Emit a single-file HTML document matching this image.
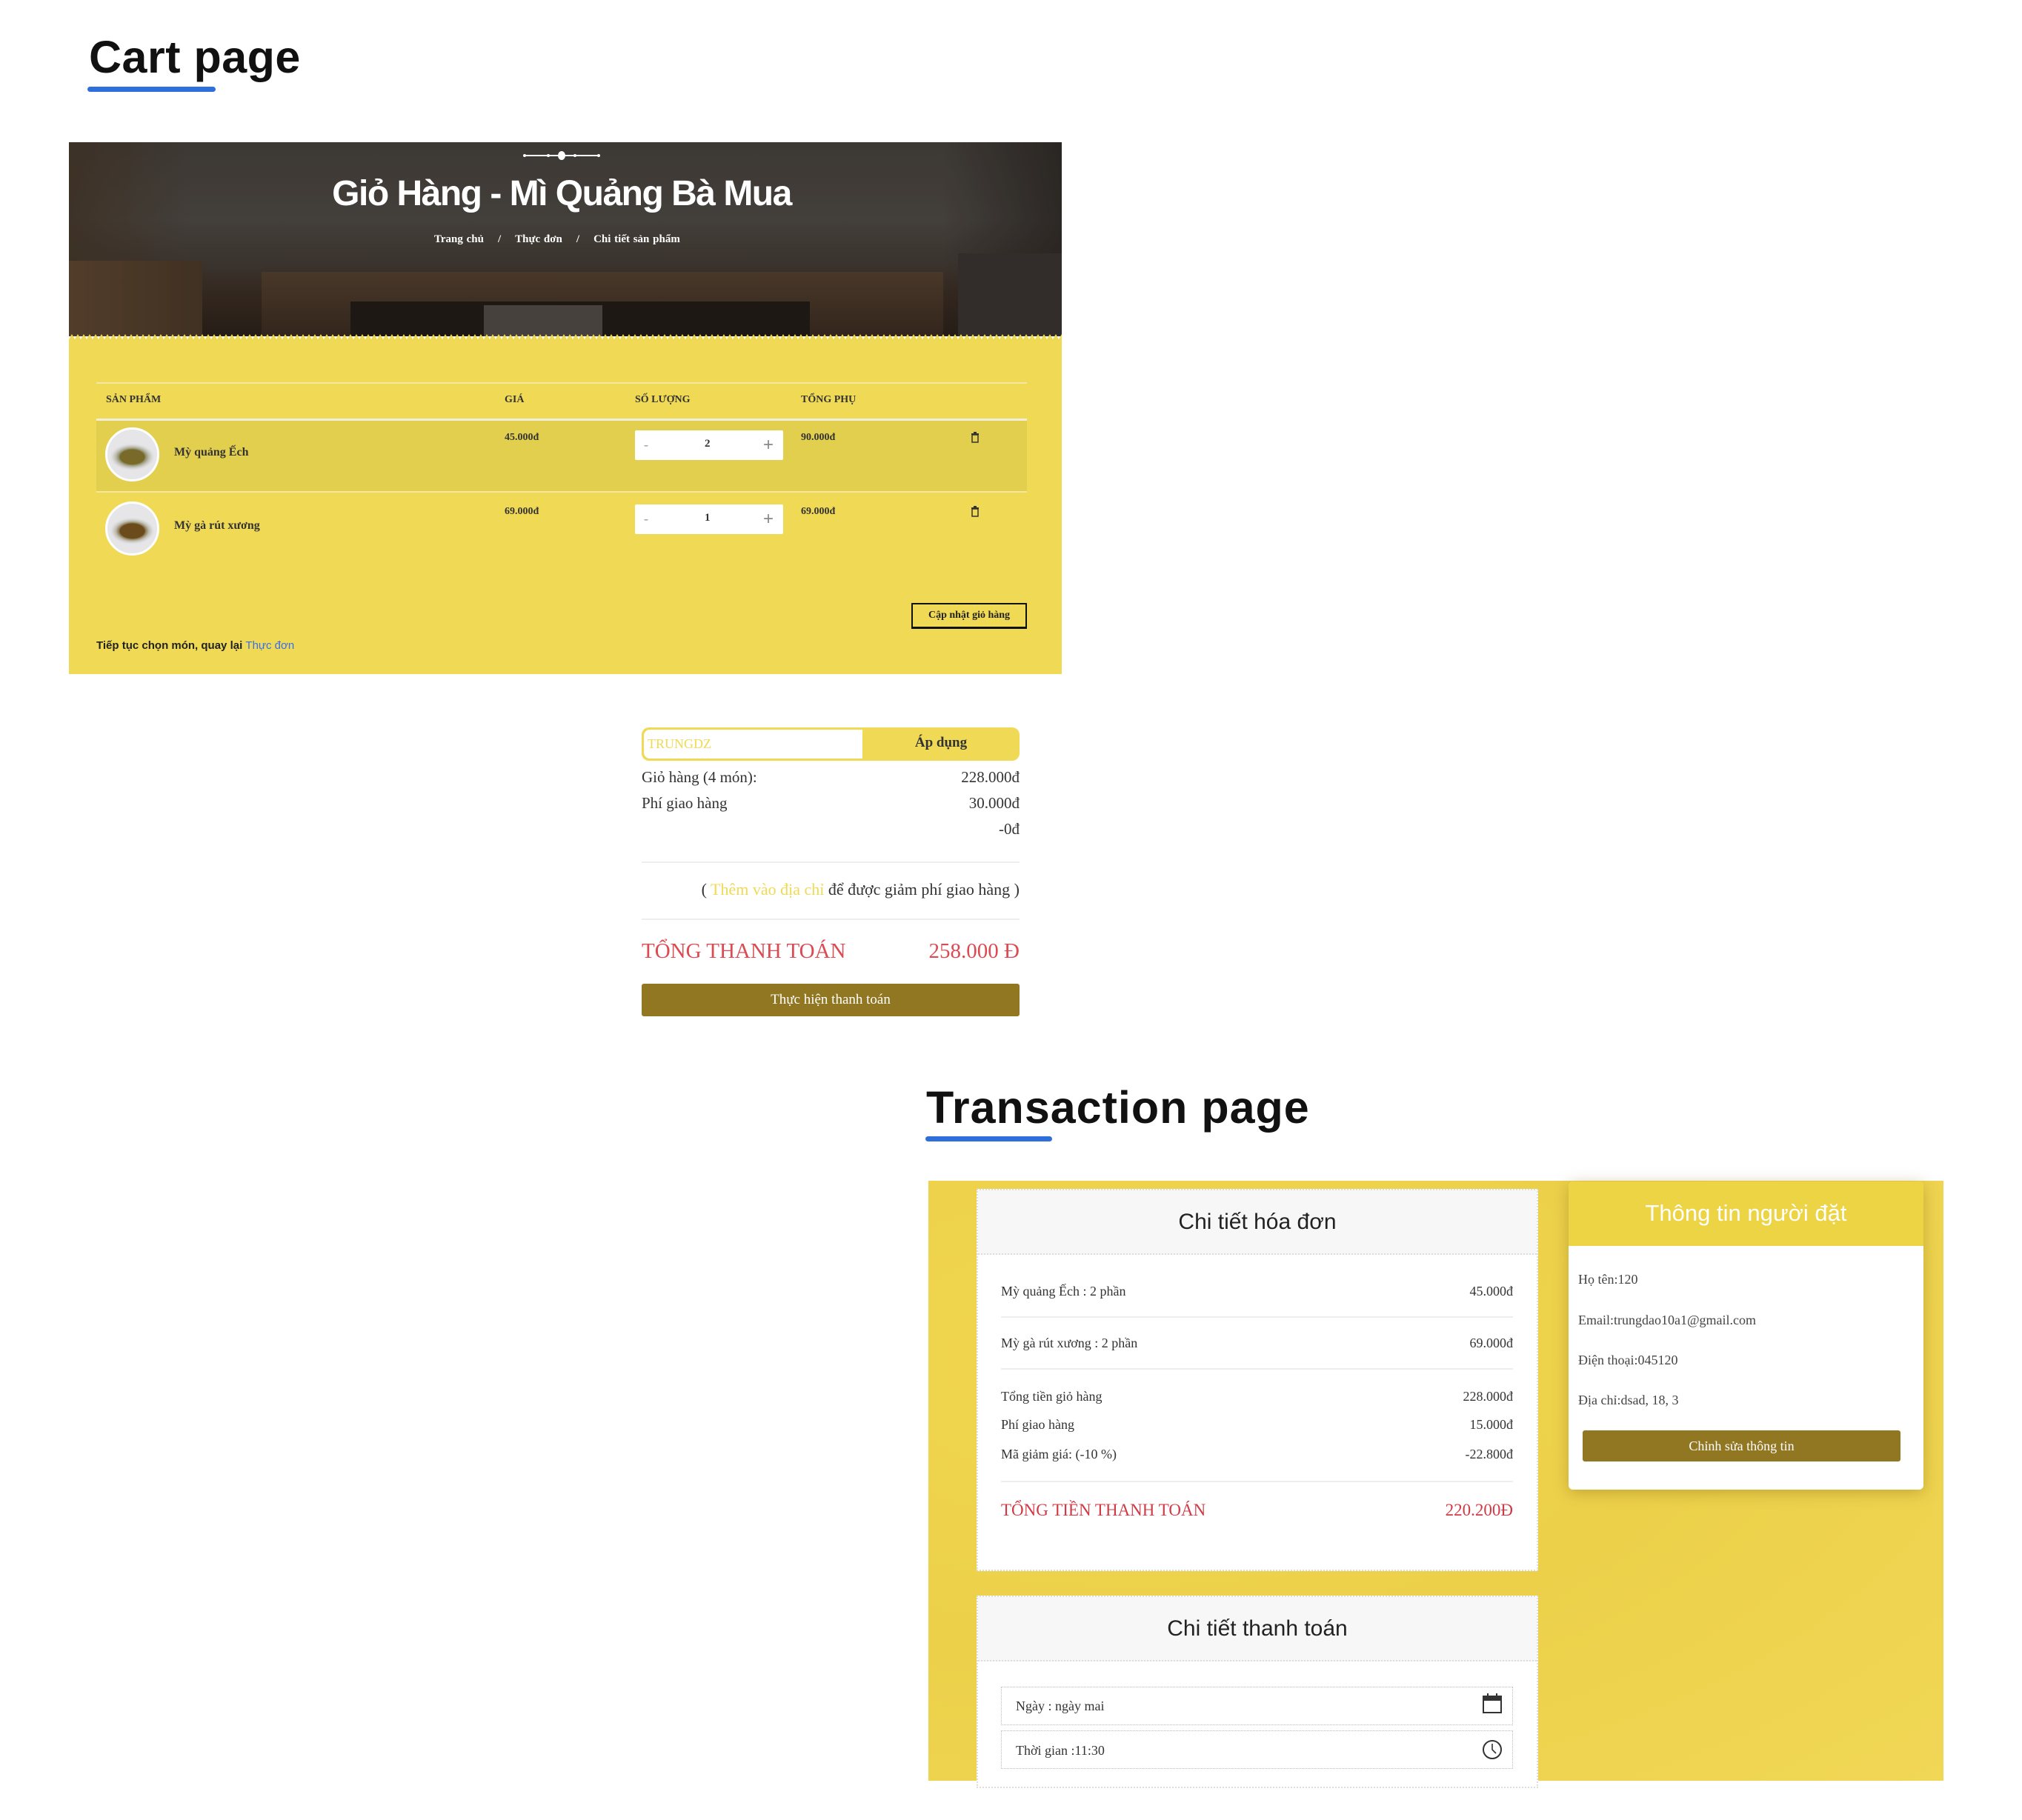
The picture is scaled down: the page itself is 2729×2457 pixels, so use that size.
<!DOCTYPE html>
<html><head><meta charset="utf-8">
<style>
*{margin:0;padding:0;box-sizing:border-box}
body{width:2729px;height:2457px;background:#fff;position:relative;overflow:hidden;font-family:"Liberation Serif",serif;color:#333}
.abs{position:absolute}
.h1{font-family:"Liberation Sans",sans-serif;font-weight:bold;font-size:61px;color:#111;white-space:nowrap}
.ul{background:#2f6fdc;height:7px;border-radius:4px}
.serif{font-family:"Liberation Serif",serif}
.sans{font-family:"Liberation Sans",sans-serif}
.t{position:absolute;white-space:nowrap}
</style></head><body>

<div class="abs h1" style="left:120px;top:42px;letter-spacing:0.5px">Cart page</div>
<div class="abs ul" style="left:118px;top:117px;width:173px"></div>

<!-- Hero -->
<div class="abs" style="left:93px;top:192px;width:1340px;height:262px;overflow:hidden;background:linear-gradient(180deg,#45403b 0%,#4d4843 40%,#433b35 62%,#3a2c22 80%,#2b211b 100%)">
  <div class="abs" style="left:0;top:0;width:1340px;height:262px;background:linear-gradient(90deg,rgba(70,55,40,.8) 0,rgba(70,55,40,0) 12%,rgba(0,0,0,0) 88%,rgba(40,35,32,.7) 100%)"></div>
  <div class="abs" style="left:0;top:160px;width:180px;height:102px;background:linear-gradient(90deg,#5e4630,#4a3828)"></div>
  <div class="abs" style="left:260px;top:175px;width:920px;height:87px;background:linear-gradient(180deg,#53402f,#3b2b21)"></div>
  <div class="abs" style="left:380px;top:215px;width:620px;height:47px;background:#231c19"></div>
  <div class="abs" style="left:560px;top:220px;width:160px;height:42px;background:#8a8580;opacity:.45"></div>
  <div class="abs" style="left:1200px;top:150px;width:140px;height:112px;background:#3a3430"></div>
  <div class="abs" style="left:0;top:0;width:1340px;height:262px;background:rgba(0,0,0,.12)"></div>
</div>
<svg class="abs" style="left:93px;top:446px" width="1340" height="12"><defs><pattern id="w" width="8" height="12" patternUnits="userSpaceOnUse"><path d="M0 12 L4 5 L8 12 Z" fill="#f0d955"/></pattern></defs><rect width="1340" height="12" fill="url(#w)"/></svg>
<svg class="abs" style="left:698px;top:200px" width="120" height="20"><line x1="10" y1="10" x2="110" y2="10" stroke="#fff" stroke-width="2"/><circle cx="10" cy="10" r="2" fill="#fff"/><circle cx="110" cy="10" r="2" fill="#fff"/><circle cx="42" cy="10" r="2" fill="#fff"/><circle cx="78" cy="10" r="2" fill="#fff"/><ellipse cx="60" cy="10" rx="5" ry="6" fill="#fff"/></svg>
<div class="t sans" style="left:0;width:1516px;text-align:center;top:234px;font-size:48px;font-weight:bold;color:#fff;letter-spacing:-1.5px">Giỏ Hàng - Mì Quảng Bà Mua</div>
<div class="t serif" style="left:586px;top:315px;font-size:15px;color:#fff;font-weight:bold;word-spacing:1px">Trang chủ &nbsp;&nbsp;&nbsp;/ &nbsp;&nbsp;&nbsp;Thực đơn &nbsp;&nbsp;&nbsp;/ &nbsp;&nbsp;&nbsp;Chi tiết sản phẩm</div>

<div class="abs" style="left:93px;top:458px;width:1340px;height:452px;background:#f0d955"></div>
<div class="abs" style="left:130px;top:516px;width:1256px;height:2px;background:#f4e7a0"></div>
<div class="t serif" style="left:143px;top:532px;font-size:14px;font-weight:bold;color:#333">SẢN PHẨM</div>
<div class="t serif" style="left:681px;top:532px;font-size:14px;font-weight:bold;color:#333">GIÁ</div>
<div class="t serif" style="left:857px;top:532px;font-size:14px;font-weight:bold;color:#333">SỐ LƯỢNG</div>
<div class="t serif" style="left:1081px;top:532px;font-size:14px;font-weight:bold;color:#333">TỔNG PHỤ</div>
<div class="abs" style="left:130px;top:565px;width:1256px;height:3px;background:#f2eedb"></div>
<div class="abs" style="left:130px;top:568px;width:1256px;height:95px;background:#e3cf4e"></div>
<div class="abs" style="left:130px;top:663px;width:1256px;height:2px;background:#f4e7a0"></div>

<div class="abs" style="left:142px;top:577px;width:73px;height:73px;border-radius:50%;background:radial-gradient(ellipse 30px 18px at 50% 55%,#7a6a2a 0 55%,#8d9066 60%,#bfbcb2 75%,#dcdcdd 90%,#e6e6e8 100%);border:3px solid #fff"></div>
<div class="abs" style="left:142px;top:677px;width:73px;height:73px;border-radius:50%;background:radial-gradient(ellipse 30px 18px at 50% 55%,#6b4a1c 0 55%,#8a7a50 60%,#bfbcb2 75%,#dcdcdd 90%,#e6e6e8 100%);border:3px solid #fff"></div>
<div class="t serif" style="left:235px;top:602px;font-size:16px;font-weight:bold;color:#333">Mỳ quảng Ếch</div>
<div class="t serif" style="left:235px;top:701px;font-size:16px;font-weight:bold;color:#333">Mỳ gà rút xương</div>
<div class="t serif" style="left:681px;top:583px;font-size:14px;font-weight:bold">45.000đ</div>
<div class="t serif" style="left:681px;top:683px;font-size:14px;font-weight:bold">69.000đ</div>
<div class="t serif" style="left:1081px;top:583px;font-size:14px;font-weight:bold">90.000đ</div>
<div class="t serif" style="left:1081px;top:683px;font-size:14px;font-weight:bold">69.000đ</div>
<div class="abs" style="left:857px;top:581px;width:200px;height:40px;background:#fff;border-radius:2px"></div>
<div class="abs" style="left:857px;top:681px;width:200px;height:40px;background:#fff;border-radius:2px"></div>
<div class="t serif" style="left:869px;top:590px;font-size:18px;color:#999">-</div>
<div class="t serif" style="left:951px;top:591px;font-size:15px;font-weight:bold">2</div>
<div class="t sans" style="left:1030px;top:587px;font-size:24px;color:#888">+</div>
<div class="t serif" style="left:869px;top:690px;font-size:18px;color:#999">-</div>
<div class="t serif" style="left:951px;top:691px;font-size:15px;font-weight:bold">1</div>
<div class="t sans" style="left:1030px;top:687px;font-size:24px;color:#888">+</div>
<svg class="abs" style="left:1310px;top:583px" width="12" height="15"><rect x="1" y="2" width="10" height="2" fill="#333"/><rect x="2" y="4" width="8" height="10" fill="none" stroke="#333" stroke-width="1.5"/><rect x="4" y="0" width="4" height="2" fill="#333"/></svg>
<svg class="abs" style="left:1310px;top:683px" width="12" height="15"><rect x="1" y="2" width="10" height="2" fill="#333"/><rect x="2" y="4" width="8" height="10" fill="none" stroke="#333" stroke-width="1.5"/><rect x="4" y="0" width="4" height="2" fill="#333"/></svg>
<div class="abs serif" style="left:1230px;top:814px;width:156px;height:34px;border:2px solid #111;box-shadow:0 1px 0 #111;font-size:14px;font-weight:bold;text-align:center;line-height:30px;color:#222">Cập nhật giỏ hàng</div>
<div class="t sans" style="left:130px;top:863px;font-size:15px;font-weight:bold;color:#222">Tiếp tục chọn món, quay lại <span style="color:#3a6ee8;font-weight:normal">Thực đơn</span></div>

<!-- summary -->
<div class="abs" style="left:866px;top:982px;width:510px;height:45px;background:#f0d955;border-radius:10px"></div>
<div class="abs" style="left:869px;top:985px;width:295px;height:39px;background:#fff;border-radius:8px 0 0 8px"></div>
<div class="t serif" style="left:874px;top:994px;font-size:18px;color:#f0d955">TRUNGDZ</div>
<div class="t serif" style="left:1164px;width:212px;text-align:center;top:992px;font-size:19px;font-weight:bold;color:#333">Áp dụng</div>
<div class="t serif" style="left:866px;top:1037px;font-size:21px;color:#333">Giỏ hàng (4 món):</div>
<div class="t serif" style="right:1353px;top:1037px;font-size:21px;color:#333">228.000đ</div>
<div class="t serif" style="left:866px;top:1072px;font-size:21px;color:#333">Phí giao hàng</div>
<div class="t serif" style="right:1353px;top:1072px;font-size:21px;color:#333">30.000đ</div>
<div class="t serif" style="right:1353px;top:1107px;font-size:21px;color:#333">-0đ</div>
<div class="abs" style="left:866px;top:1163px;width:510px;height:2px;background:#eee"></div>
<div class="t serif" style="right:1353px;top:1188px;font-size:22px;color:#333">( <span style="color:#f0d955">Thêm vào địa chỉ</span> để được giảm phí giao hàng )</div>
<div class="abs" style="left:866px;top:1240px;width:510px;height:2px;background:#eee"></div>
<div class="t serif" style="left:866px;top:1268px;font-size:29px;color:#dc4a52">TỔNG THANH TOÁN</div>
<div class="t serif" style="right:1353px;top:1268px;font-size:29px;color:#dc4a52">258.000 Đ</div>
<div class="abs serif" style="left:866px;top:1328px;width:510px;height:44px;background:#927723;border-radius:3px;color:#fff;font-size:19px;text-align:center;line-height:44px">Thực hiện thanh toán</div>

<!-- Transaction page -->
<div class="abs h1" style="left:1250px;top:1460px;letter-spacing:1px">Transaction page</div>
<div class="abs ul" style="left:1249px;top:1534px;width:171px"></div>

<div class="abs" style="left:1253px;top:1594px;width:1370px;height:810px;background:radial-gradient(ellipse at 20% 30%,#f1d650,#ecd04a 50%,#f0d755 100%)"></div>

<div class="abs" style="left:1318px;top:1605px;width:758px;height:516px;background:#fff;border:2px dotted #ddd"></div>
<div class="abs" style="left:1320px;top:1607px;width:754px;height:87px;background:#f7f7f7;border-bottom:2px dotted #ddd"></div>
<div class="t sans" style="left:1318px;width:758px;text-align:center;top:1633px;font-size:30px;color:#222">Chi tiết hóa đơn</div>
<div class="t serif" style="left:1351px;top:1733px;font-size:18px">Mỳ quảng Ếch : 2 phần</div>
<div class="t serif" style="right:687px;top:1733px;font-size:18px">45.000đ</div>
<div class="abs" style="left:1351px;top:1777px;width:691px;height:2px;background:#eee"></div>
<div class="t serif" style="left:1351px;top:1803px;font-size:18px">Mỳ gà rút xương : 2 phần</div>
<div class="t serif" style="right:687px;top:1803px;font-size:18px">69.000đ</div>
<div class="abs" style="left:1351px;top:1847px;width:691px;height:2px;background:#eee"></div>
<div class="t serif" style="left:1351px;top:1875px;font-size:18px">Tổng tiền giỏ hàng</div>
<div class="t serif" style="right:687px;top:1875px;font-size:18px">228.000đ</div>
<div class="t serif" style="left:1351px;top:1913px;font-size:18px">Phí giao hàng</div>
<div class="t serif" style="right:687px;top:1913px;font-size:18px">15.000đ</div>
<div class="t serif" style="left:1351px;top:1953px;font-size:18px">Mã giảm giá: (-10 %)</div>
<div class="t serif" style="right:687px;top:1953px;font-size:18px">-22.800đ</div>
<div class="abs" style="left:1351px;top:1999px;width:691px;height:2px;background:#eee"></div>
<div class="t serif" style="left:1351px;top:2026px;font-size:23px;color:#d03a45">TỔNG TIỀN THANH TOÁN</div>
<div class="t serif" style="right:687px;top:2026px;font-size:23px;color:#d03a45">220.200Đ</div>

<div class="abs" style="left:1318px;top:2154px;width:758px;height:260px;background:#fff;border:2px dotted #ddd"></div>
<div class="abs" style="left:1320px;top:2156px;width:754px;height:87px;background:#f7f7f7;border-bottom:2px dotted #ddd"></div>
<div class="t sans" style="left:1318px;width:758px;text-align:center;top:2182px;font-size:30px;color:#222">Chi tiết thanh toán</div>
<div class="abs" style="left:1351px;top:2277px;width:691px;height:52px;border:1px dotted #bbb"></div>
<div class="abs" style="left:1351px;top:2336px;width:691px;height:52px;border:1px dotted #bbb"></div>
<div class="t serif" style="left:1371px;top:2293px;font-size:18px">Ngày : ngày mai</div>
<div class="t serif" style="left:1371px;top:2353px;font-size:18px">Thời gian :11:30</div>
<svg class="abs" style="left:2000px;top:2284px" width="28" height="30"><rect x="2" y="6" width="24" height="22" fill="none" stroke="#333" stroke-width="2"/><rect x="2" y="6" width="24" height="6" fill="#333"/><line x1="8" y1="2" x2="8" y2="9" stroke="#333" stroke-width="2"/><line x1="20" y1="2" x2="20" y2="9" stroke="#333" stroke-width="2"/></svg>
<svg class="abs" style="left:2000px;top:2347px" width="28" height="30"><circle cx="14" cy="15" r="12" fill="none" stroke="#333" stroke-width="2"/><path d="M14 7 L14 15 L19 20" fill="none" stroke="#333" stroke-width="1.6"/></svg>

<div class="abs" style="left:2117px;top:1595px;width:479px;height:416px;background:#fff;border-radius:6px;box-shadow:0 4px 20px rgba(120,90,0,.35);overflow:hidden">
  <div style="height:87px;background:#ecd444"></div>
</div>
<div class="t sans" style="left:2117px;width:479px;text-align:center;top:1620px;font-size:31px;color:#fff">Thông tin người đặt</div>
<div class="t serif" style="left:2130px;top:1717px;font-size:18px;color:#444">Họ tên:120</div>
<div class="t serif" style="left:2130px;top:1772px;font-size:18px;color:#444">Email:trungdao10a1@gmail.com</div>
<div class="t serif" style="left:2130px;top:1826px;font-size:18px;color:#444">Điện thoại:045120</div>
<div class="t serif" style="left:2130px;top:1880px;font-size:18px;color:#444">Địa chỉ:dsad, 18, 3</div>
<div class="abs serif" style="left:2136px;top:1931px;width:429px;height:42px;background:#927723;border-radius:3px;color:#fff;font-size:18px;text-align:center;line-height:42px">Chỉnh sửa thông tin</div>

</body></html>
